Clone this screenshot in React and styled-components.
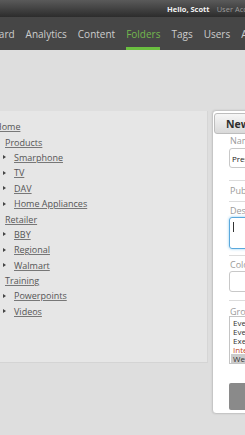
import React from 'react'
import styled, { createGlobalStyle } from 'styled-components'

const GlobalStyle = createGlobalStyle`
    body {
        margin: 0;
        background: #dedede;
        font-family: "Open Sans", "Liberation Sans", sans-serif;
        overflow: hidden;
    }
`

const Page = styled.div`
    width: 245px;
    height: 435px;
    overflow: hidden;
`

const TopBar = styled.div`
    height: 17px;
    display: flex;
    align-items: center;
    padding-left: 167px;
    white-space: nowrap;
    background: linear-gradient(#5a5a5a, #2c2c2c);
`

const Hello = styled.span`
    font-size: 7.5px;
    font-weight: 700;
    color: #f2f2f2;
    margin-right: 7px;
`

const Account = styled.span`
    font-size: 7.5px;
    color: #9c9c9c;
`

const Nav = styled.div`
    height: 33px;
    display: flex;
    gap: 11px;
    margin-left: -37px;
    white-space: nowrap;
    background: #464646;
    box-sizing: border-box;
`

const NavItem = styled.div`
    display: flex;
    align-items: center;
    padding-top: 4px;
    font-size: 10px;
    color: ${p => (p.$active ? '#74b84e' : '#cdcdcd')};
    border-bottom: 3px solid ${p => (p.$active ? '#6bbf40' : 'transparent')};
`

const Main = styled.div`
    display: flex;
    align-items: flex-start;
    gap: 4px;
    padding-top: 60px;
`

const TreePanel = styled.div`
    flex: 0 0 208px;
    height: 252px;
    margin-top: 1px;
    box-sizing: border-box;
    padding-top: 8px;
    background: #e6e6e6;
    border-right: 1px solid #d6d6d6;
    border-bottom: 1px solid #d4d4d4;
    overflow: hidden;
`

const Tree = styled.div`
    margin-left: -5px;
`

const Row = styled.div`
    display: flex;
    align-items: center;
    height: 15.4px;
    padding-left: ${p => p.$indent}px;
`

const Bullet = styled.span`
    width: 0;
    height: 0;
    border-left: 3.5px solid #444;
    border-top: 2.5px solid transparent;
    border-bottom: 2.5px solid transparent;
    margin-right: 8px;
`

const TreeLink = styled.a`
    font-size: 9px;
    color: #555;
    text-decoration: underline;
    text-decoration-color: #777;
    white-space: nowrap;
`

const Modal = styled.div`
    flex: 0 0 200px;
    box-sizing: border-box;
    padding: 2px 2px 3px 1px;
    background: #fff;
    border: 1px solid #c6c6c6;
    border-radius: 4px;
    box-shadow: 0 0 2px rgba(0, 0, 0, 0.12);
`

const ModalHeader = styled.div`
    height: 21px;
    box-sizing: border-box;
    display: flex;
    align-items: center;
    padding-left: 11px;
    font-size: 10.5px;
    font-weight: 700;
    color: #2e2e2e;
    background: linear-gradient(#f6f6f6, #d9d9d9);
    border: 1px solid #bdbdbd;
    border-radius: 3px;
    white-space: nowrap;
`

const Form = styled.div`
    display: flex;
    flex-direction: column;
    padding-left: 15px;
`

const Label = styled.div`
    margin-top: ${p => p.$top}px;
    height: 12px;
    line-height: 12px;
    padding-left: 1px;
    font-size: 9px;
    color: #9a9a9a;
    white-space: nowrap;
`

const Input = styled.div`
    margin-top: ${p => p.$top || 0}px;
    height: ${p => p.$h}px;
    box-sizing: border-box;
    display: flex;
    align-items: center;
    padding-left: 2px;
    font-size: 8px;
    color: #222;
    border: 1px solid #c8c8c8;
    border-radius: 3px;
    white-space: nowrap;
`

const TextArea = styled.div`
    height: 32px;
    box-sizing: border-box;
    padding: 4px 3px;
    border: 1px solid #5aa8dc;
    border-radius: 3px;
    box-shadow: 0 0 3px #8ccbf0;
`

const Caret = styled.span`
    display: block;
    width: 1px;
    height: 10px;
    background: #333;
`

const Divider = styled.div`
    margin-top: ${p => p.$top}px;
    height: 1px;
    background: #dcdcdc;
`

const ListBox = styled.div`
    margin-top: -2px;
    box-sizing: border-box;
    padding: 1px 0 0 1px;
    border: 1px solid #c4c4c4;
    overflow: hidden;
`

const ListItem = styled.div`
    height: 9px;
    line-height: 9px;
    padding-left: 2px;
    font-size: 8px;
    color: ${p => (p.$accent ? '#c4461e' : '#333')};
    background: ${p => (p.$selected ? '#cbcbcb' : 'transparent')};
    white-space: nowrap;
`

const Button = styled.div`
    margin-top: 19px;
    height: 27px;
    background: #8a8a8a;
    border-radius: 2px;
`

const navItems = ['Dashboard', 'Analytics', 'Content', 'Folders', 'Tags', 'Users', 'Admin']

const tree = [
    { label: 'Home', indent: 0 },
    { label: 'Products', indent: 10 },
    { label: 'Smarphone', bullet: true },
    { label: 'TV', bullet: true },
    { label: 'DAV', bullet: true },
    { label: 'Home Appliances', bullet: true },
    { label: 'Retailer', indent: 10 },
    { label: 'BBY', bullet: true },
    { label: 'Regional', bullet: true },
    { label: 'Walmart', bullet: true },
    { label: 'Training', indent: 10 },
    { label: 'Powerpoints', bullet: true },
    { label: 'Videos', bullet: true },
]

const App = () => {
    return (
        <Page>
            <GlobalStyle />
            <TopBar>
                <Hello>Hello, Scott</Hello>
                <Account>User Account</Account>
            </TopBar>
            <Nav>
                {navItems.map(item => (
                    <NavItem key={item} $active={item === 'Folders'}>{item}</NavItem>
                ))}
            </Nav>
            <Main>
                <TreePanel>
                    <Tree>
                        {tree.map(node => (
                            <Row key={node.label} $indent={node.bullet ? 8 : node.indent}>
                                {node.bullet && <Bullet />}
                                <TreeLink>{node.label}</TreeLink>
                            </Row>
                        ))}
                    </Tree>
                </TreePanel>
                <Modal>
                    <ModalHeader>New Folder</ModalHeader>
                    <Form>
                        <Label $top={1}>Name</Label>
                        <Input $top={1} $h={20}>Presentations</Input>
                        <Divider $top={12} />
                        <Label $top={4}>Public</Label>
                        <Divider $top={4} />
                        <Label $top={3}>Description</Label>
                        <TextArea><Caret /></TextArea>
                        <Divider $top={6} />
                        <Label $top={3}>Color</Label>
                        <Input $h={21} />
                        <Divider $top={8} />
                        <Label $top={5}>Groups</Label>
                        <ListBox>
                            <ListItem>Everyone</ListItem>
                            <ListItem>Everyone Else</ListItem>
                            <ListItem>Executives</ListItem>
                            <ListItem $accent>International</ListItem>
                            <ListItem $selected>West Region</ListItem>
                        </ListBox>
                        <Button />
                    </Form>
                </Modal>
            </Main>
        </Page>
    )
}

export default App
